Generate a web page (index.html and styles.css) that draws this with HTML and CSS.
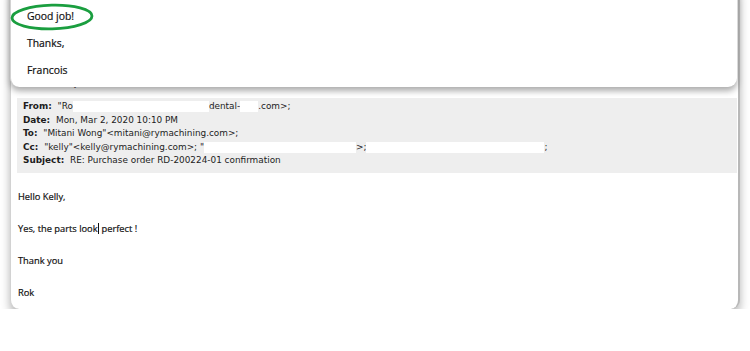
FILE: index.html
```html
<!DOCTYPE html>
<html lang="en">
<head>
  <meta charset="UTF-8">
  <title>Email reply</title>
  <link rel="stylesheet" href="styles.css">
</head>
<body>
  <div class="mail">
    <div class="reply">
      <p class="reply-line">Good job!</p>
      <p class="reply-line">Thanks,</p>
      <p class="reply-line">Francois</p>
      <svg class="circle" width="88" height="30" viewBox="0 0 88 30">
        <ellipse cx="43" cy="15" rx="40" ry="11.8" fill="none" stroke="#1a9e3f" stroke-width="2.8" transform="rotate(-1.5 43 15)"/>
      </svg>
    </div>

    <div class="sent-row"><span class="caret">&#711;</span></div>

    <div class="headers">
      <div class="hrow"><b>From:</b> "Ro<span class="blank" style="width:136px"></span>dental-<span class="blank" style="width:18px"></span>.com&gt;;</div>
      <div class="hrow"><b>Date:</b> Mon, Mar 2, 2020 10:10 PM</div>
      <div class="hrow"><b>To:</b> "Mitani Wong"&lt;mitani@rymachining.com&gt;;</div>
      <div class="hrow"><b>Cc:</b> "kelly"&lt;kelly@rymachining.com&gt;; "<span class="blank" style="width:152px"></span>&gt;;<span class="blank" style="width:178px"></span>;</div>
      <div class="hrow"><b>Subject:</b> RE: Purchase order RD-200224-01 confirmation</div>
    </div>

    <div class="body">
      <p>Hello Kelly,</p>
      <p>Yes, the parts look<span class="cursor"></span> perfect !</p>
      <p>Thank you</p>
      <p>Rok</p>
    </div>
  </div>
</body>
</html>
```

FILE: styles.css
```css
body {
  margin: 0;
  background: #ffffff;
  color: #222;
  font-family: "Open Sans", "Noto Sans", sans-serif;
  overflow: hidden;
}
.mail {
  position: relative;
  margin: -12px 10px 0 10px;
  padding-top: 100px;
  height: 221px;
  background: #ffffff;
  border-radius: 0 0 9px 9px;
  border-left: 1px solid #d2d2d2;
  border-right: 2px solid #b8b8b8;
  box-shadow: 0 6px 10px rgba(0, 0, 0, 0.3);
}
.reply {
  position: absolute;
  top: 0;
  left: -1px;
  right: 1px;
  height: 84px;
  padding-top: 15px;
  background: #fff;
  border-radius: 0 0 9px 9px;
  border-left: 1px solid #d2d2d2;
  box-shadow: 0 4px 6px rgba(0, 0, 0, 0.33);
  z-index: 2;
}
.reply-line {
  margin: 0 0 0 16px;
  height: 27px;
  line-height: 27px;
  font-size: 10.4px;
  color: #111;
  -webkit-text-stroke: 0.2px #111;
}
.circle {
  position: absolute;
  left: -2px;
  top: 14px;
}
.sent-row {
  height: 8px;
  padding-left: 62px;
  font-size: 10px;
  line-height: 6px;
  color: #555;
}
.headers {
  margin: 2px 1px 0 6px;
  padding: 2px 6px 5px;
  background: #eeeeee;
  font-family: "DejaVu Sans", Verdana, sans-serif;
  font-size: 8.9px;
  color: #1c1c1c;
}
.hrow {
  height: 13.5px;
  line-height: 13.5px;
  white-space: nowrap;
}
.hrow b {
  margin-right: 3px;
}
.blank {
  display: inline-block;
  height: 11px;
  vertical-align: middle;
  background: #fff;
}
.body {
  padding: 11px 0 0 7px;
  font-size: 9.3px;
  color: #111;
  -webkit-text-stroke: 0.2px #111;
}
.body p {
  margin: 0;
  height: 32.3px;
  line-height: 25px;
}
.cursor {
  display: inline-block;
  width: 1px;
  height: 11px;
  margin-left: 0.5px;
  vertical-align: -2px;
  background: #111;
}
```
